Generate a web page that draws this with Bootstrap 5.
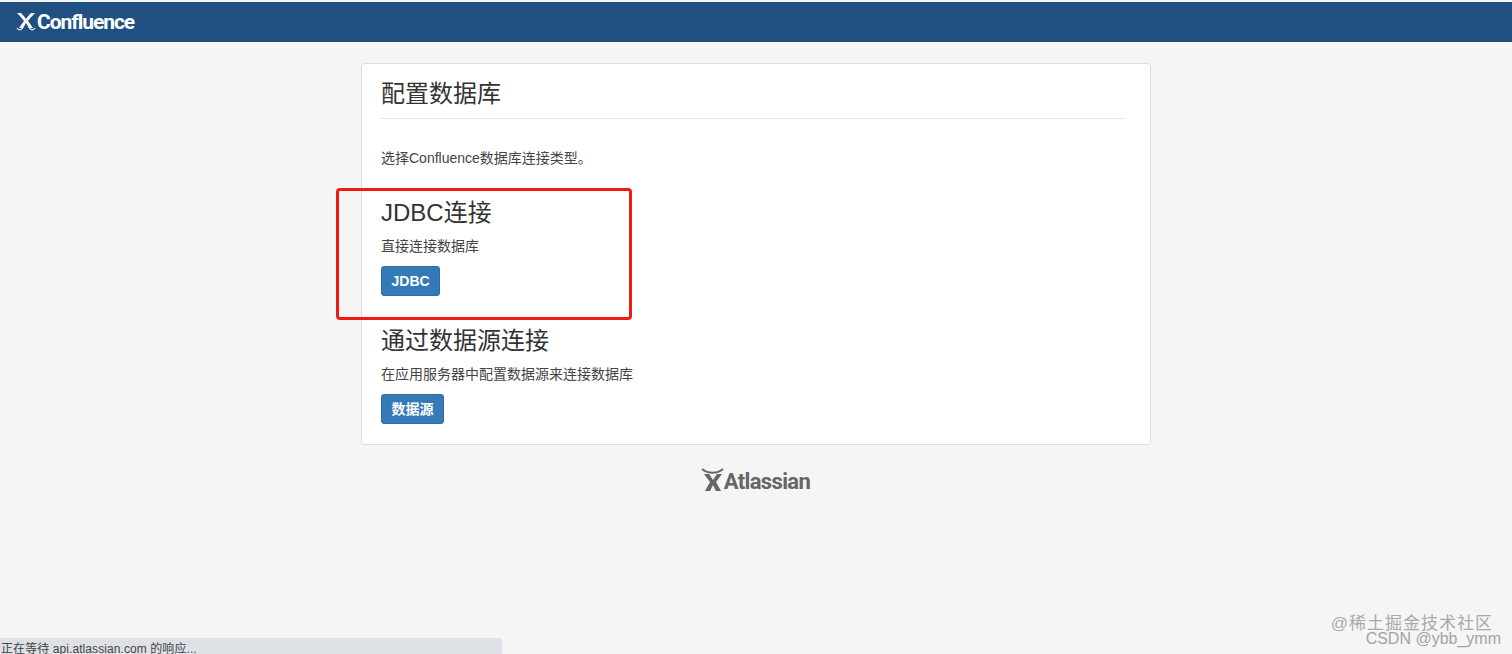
<!DOCTYPE html>
<html lang="zh-CN">
<head>
<meta charset="utf-8">
<title>配置数据库</title>
<link href="https://cdn.jsdelivr.net/npm/bootstrap@5.3.0/dist/css/bootstrap.min.css" rel="stylesheet">
<style>
html,body{height:654px;overflow:hidden}
body{background:#f5f5f5;color:#333;font-family:"Liberation Sans","Noto Sans CJK SC",sans-serif;font-size:14px;line-height:20px;position:relative}
.topbar{margin-top:2px;height:40px;background:#205081;border-bottom:1px solid #2d4a6b;padding-left:16px;color:#fff}
.brand-word{font-family:"Roboto","Liberation Sans",sans-serif;font-weight:700;font-size:21px;letter-spacing:-1.05px;line-height:1;margin-left:1px;padding-top:2px}
.setup-box{width:790px;height:382px;margin:21px auto 0;background:#fff;border:1px solid #ddd;border-radius:4px;padding:0 25px 0 19px;position:relative}
.setup-title{font-size:24px;line-height:30px;font-weight:400;color:#333;margin:15px 0 0;padding-bottom:9px;border-bottom:1px solid #e5e5e5}
.setup-intro{margin:29px 0 0;color:#444}
.setup-sub{font-size:24px;line-height:30px;font-weight:400;color:#333;margin:0 0 8px}
.first-sub{margin-top:30px}
.second-sub{margin-top:30px}
.setup-text{margin:0 0 10px;color:#444}
.btn-setup{background:#337ab7;border:1px solid #2e6da4;color:#fff;font-weight:700;font-size:14px;line-height:20px;padding:4px 9.5px;border-radius:3px}
.btn-setup:hover{background:#286090;color:#fff}
.red-mark{position:absolute;left:-26px;top:124px;width:296px;height:132px;border:3px solid #f01c14;border-radius:4px;pointer-events:none}
.vendor{margin-top:21px;color:#666;padding-right:1px}
.vendor-word{font-family:"Roboto","Liberation Sans",sans-serif;font-weight:700;font-size:22px;letter-spacing:-.65px;line-height:1;padding-top:4px}
.status-strip{position:absolute;left:0;bottom:0;width:502px;height:16px;background:#dee1e6;border-top-right-radius:3px;padding:3px 0 0 1px;font-size:12px;letter-spacing:.08px;line-height:16px;color:#444;overflow:hidden;white-space:nowrap}
.wm{position:absolute;white-space:nowrap}
.wm-juejin{right:19px;bottom:22px;font-size:17px;line-height:16px;color:#a9a9a9;letter-spacing:1px}
.wm-csdn{right:11px;bottom:8px;font-size:16px;line-height:14px;color:#a3a3a3}
</style>
</head>
<body>
<header class="topbar d-flex align-items-center">
  <svg width="20" height="19" viewBox="0 0 20 19" fill="none" stroke="#fff" aria-hidden="true">
    <path d="M1 1 L5 1 Q8 4 10 7 Q12 4 15 1 L19 1 Q15 5 12 9 Q15 13 17 16 L13 16 L10 11 L7 16 L3 16 Q5 13 8 9 Q5 5 1 1 Z" fill="#fff" stroke="none"/>
    <path d="M1 16c2 3 5 2 6-1M19 16c-2 3-5 2-6-1" stroke-width="1.2"/>
  </svg>
  <span class="brand-word">Confluence</span>
</header>
<main class="setup-box">
  <h1 class="setup-title">配置数据库</h1>
  <p class="setup-intro">选择Confluence数据库连接类型。</p>
  <h2 class="setup-sub first-sub">JDBC连接</h2>
  <p class="setup-text">直接连接数据库</p>
  <button type="button" class="btn btn-setup">JDBC</button>
  <h2 class="setup-sub second-sub">通过数据源连接</h2>
  <p class="setup-text">在应用服务器中配置数据源来连接数据库</p>
  <button type="button" class="btn btn-setup">数据源</button>
  <div class="red-mark"></div>
</main>
<footer class="vendor d-flex justify-content-center align-items-center">
  <svg width="23" height="27" viewBox="0 0 23 27" fill="none" aria-hidden="true">
    <path d="M1 3c6 5 15 5 21 0" stroke="#666" stroke-width="2"/>
    <path d="M3 8 L8 8 L12 14 L16 8 L21 8 L15 16 L20 25 L15 25 L12 19 L9 25 L4 25 L9 16 Z" fill="#666"/>
  </svg>
  <span class="vendor-word">Atlassian</span>
</footer>
<div class="status-strip">正在等待 api.atlassian.com 的响应...</div>
<div class="wm wm-juejin">@稀土掘金技术社区</div>
<div class="wm wm-csdn">CSDN @ybb_ymm</div>
<script src="https://cdn.jsdelivr.net/npm/bootstrap@5.3.0/dist/js/bootstrap.bundle.min.js"></script>
</body>
</html>
